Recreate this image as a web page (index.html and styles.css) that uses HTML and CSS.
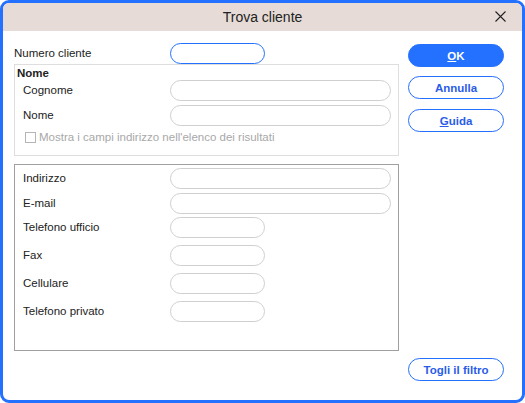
FILE: index.html
```html
<!DOCTYPE html>
<html lang="it">
<head>
  <meta charset="UTF-8" />
  <title>Trova cliente</title>
  <link rel="stylesheet" href="styles.css">
</head>
<body>
  <div class="dialog">
    <div class="titlebar">
      <span class="title">Trova cliente</span>
      <button class="close" aria-label="Chiudi">
        <svg width="11" height="11" viewBox="0 0 11 11"><path d="M0.5 0.5L10.5 10.5M10.5 0.5L0.5 10.5" stroke="#222" stroke-width="1.1" fill="none"/></svg>
      </button>
    </div>

    <div class="content">
      <div class="left">
        <div class="row row-numero">
          <label>Numero cliente</label>
          <input type="text" class="field short focus" />
        </div>

        <div class="group-nome">
          <div class="legend">Nome</div>
          <div class="row">
            <label>Cognome</label>
            <input type="text" class="field long" />
          </div>
          <div class="row">
            <label>Nome</label>
            <input type="text" class="field long" />
          </div>
          <div class="check">
            <span class="box"></span>
            <span>Mostra i campi indirizzo nell'elenco dei risultati</span>
          </div>
        </div>

        <div class="group-contatti">
          <div class="row r1"><label>Indirizzo</label><input type="text" class="field long" /></div>
          <div class="row r2"><label>E-mail</label><input type="text" class="field long" /></div>
          <div class="row r3"><label>Telefono ufficio</label><input type="text" class="field short" /></div>
          <div class="row r4"><label>Fax</label><input type="text" class="field short" /></div>
          <div class="row r4"><label>Cellulare</label><input type="text" class="field short" /></div>
          <div class="row r4"><label>Telefono privato</label><input type="text" class="field short" /></div>
        </div>
      </div>

      <div class="right">
        <button class="btn primary"><u>O</u>K</button>
        <button class="btn">Annulla</button>
        <button class="btn"><u>G</u>uida</button>
        <button class="btn bottom">Togli il filtro</button>
      </div>
    </div>
  </div>
</body>
</html>
```

FILE: styles.css
```css
html, body {
  margin: 0;
  padding: 0;
  background: #fff;
}

body {
  font-family: "Liberation Sans", Arial, sans-serif;
  font-size: 11.5px;
  color: #222;
}

.dialog {
  width: 519px;
  height: 397px;
  border: 3px solid #2470ff;
  border-radius: 9px;
  overflow: hidden;
  display: flex;
  flex-direction: column;
}

.titlebar {
  height: 28px;
  background: #e6dbd6;
  display: flex;
  align-items: center;
  justify-content: center;
  position: relative;
}

.title {
  font-size: 14px;
  color: #222;
}

.close {
  position: absolute;
  right: 16px;
  top: 8px;
  padding: 0;
  border: none;
  background: none;
  width: 11px;
  height: 11px;
  line-height: 0;
}

.content {
  flex: 1;
  display: flex;
  padding: 12px 0 0 11px;
}

.left {
  width: 385px;
}

.row {
  display: flex;
  align-items: center;
}

.row label {
  width: 156px;
  flex: none;
  padding-bottom: 2px;
}

.field {
  height: 21px;
  box-sizing: border-box;
  border: 1px solid #cfcfcf;
  border-radius: 11px;
  background: #fff;
  padding: 0 8px;
  margin: 0;
  font: inherit;
  outline: none;
}

.field.short {
  width: 95px;
}

.field.long {
  width: 221px;
}

.field.focus {
  border-color: #2470ff;
}

.group-nome {
  margin-top: 0;
  height: 92px;
  box-sizing: border-box;
  border: 1px solid #dedede;
  padding: 1px 0 0 2px;
}

.legend {
  font-weight: bold;
  line-height: 14px;
}

.group-nome .row label {
  width: 147px;
  padding-left: 6px;
}

.group-nome .row + .row {
  margin-top: 4px;
}

.check {
  display: flex;
  align-items: center;
  gap: 3px;
  margin: 5px 0 0 8px;
  color: #a8a8a8;
}

.check .box {
  width: 9px;
  height: 9px;
  border: 1px solid #b5b5b5;
  background: #fff;
}

.group-contatti {
  margin-top: 8px;
  height: 187px;
  box-sizing: border-box;
  border: 1px solid #a0a0a0;
  padding-left: 8px;
}

.group-contatti .row label {
  width: 147px;
}

.group-contatti .r1 { margin-top: 3px; }
.group-contatti .r2 { margin-top: 4px; }
.group-contatti .r3 { margin-top: 3px; }
.group-contatti .r4 { margin-top: 7px; }

.right {
  margin-left: 9px;
  width: 96px;
  display: flex;
  flex-direction: column;
  padding-top: 1px;
  padding-bottom: 19px;
}

.btn {
  width: 96px;
  height: 23px;
  margin-bottom: 10px;
  box-sizing: border-box;
  border: 1px solid #2470ff;
  border-radius: 12px;
  background: #fff;
  color: #2a5ce8;
  font-family: "Liberation Sans", Arial, sans-serif;
  font-size: 11.5px;
  font-weight: bold;
  padding: 0;
}

.btn.primary {
  background: #2470ff;
  color: #fff;
  margin-bottom: 9px;
}

.btn.bottom {
  margin-top: auto;
  margin-bottom: 0;
}
```
